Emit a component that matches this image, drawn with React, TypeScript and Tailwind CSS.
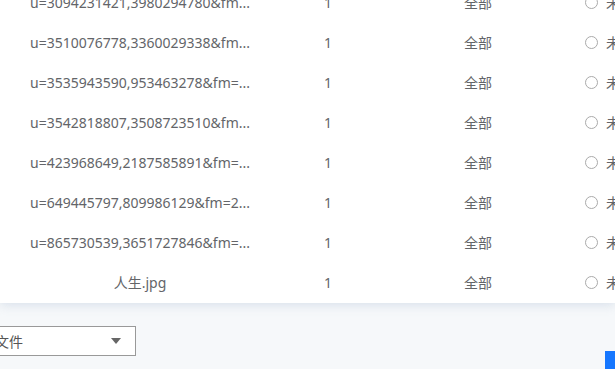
const rows = [
  "u=3094231421,3980294780&fm...",
  "u=3510076778,3360029338&fm...",
  "u=3535943590,953463278&fm=...",
  "u=3542818807,3508723510&fm...",
  "u=423968649,2187585891&fm=...",
  "u=649445797,809986129&fm=2...",
  "u=865730539,3651727846&fm=...",
  "人生.jpg",
];

const App = () => {
  return (
    <div className="h-[369px] w-[615px] overflow-hidden bg-[#f6f8fa] font-['Noto_Sans','Noto_Sans_CJK_SC',sans-serif] text-[14px] text-[#636569]">
      <div className="-mt-[17px] bg-white shadow-[0_2px_10px_rgba(180,195,215,0.45)]">
        {rows.map((name, i) => (
          <div key={i} className="flex h-[40px] items-center whitespace-nowrap pb-[1px]">
            <div className="flex w-[280px] shrink-0 justify-center">
              <span className="max-w-[226px] truncate">{name}</span>
            </div>
            <div className="w-[96px] shrink-0 text-center">1</div>
            <div className="w-[204px] shrink-0 text-center">全部</div>
            <div className="flex shrink-0 items-center gap-[8px] pl-[5px]">
              <span className="block h-[13px] w-[13px] rounded-full border border-[#aaa] bg-white" />
              <span>未审核</span>
            </div>
          </div>
        ))}
      </div>
      <div className="mt-[23px] flex items-start justify-between">
        <div className="-ml-[20px] flex h-[30px] w-[156px] items-center justify-between border border-[#999] bg-white pl-[14px] pr-[14px] text-[#555]">
          <span>文件</span>
          <span className="h-0 w-0 border-x-[5px] border-t-[6px] border-x-transparent border-t-[#666]" />
        </div>
        <div className="mt-[25px] h-[20px] w-[10px] bg-[#1677ff]" />
      </div>
    </div>
  );
};

export default App;
